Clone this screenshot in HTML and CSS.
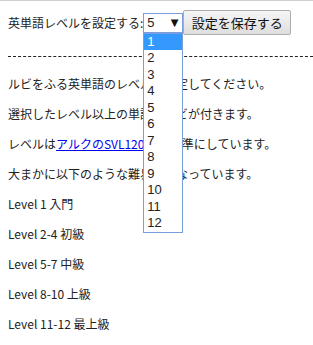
FILE: index.html
```html
<!DOCTYPE html>
<html lang="ja">
<head>
<meta charset="utf-8">
<link rel="stylesheet" href="styles.css">
</head>
<body>
<div class="bar">
  <span class="label">英単語レベルを設定する:</span>
  <div class="select-wrap">
    <div class="select"><span class="val">5</span><span class="arrow">▼</span></div>
    <ul class="list">
      <li class="sel">1</li><li>2</li><li>3</li><li>4</li><li>5</li><li>6</li>
      <li>7</li><li>8</li><li>9</li><li>10</li><li>11</li><li>12</li>
    </ul>
  </div>
  <button class="save">設定を保存する</button>
</div>
<hr class="dash">
<div class="content">
  <p>ルビをふる英単語のレベルを設定してください。</p>
  <p>選択したレベル以上の単語にルビが付きます。</p>
  <p>レベルは<a href="#">アルクのSVL12000</a>を基準にしています。</p>
  <p>大まかに以下のような難易度になっています。</p>
  <p>Level 1 入門</p>
  <p>Level 2-4 初級</p>
  <p>Level 5-7 中級</p>
  <p>Level 8-10 上級</p>
  <p>Level 11-12 最上級</p>
</div>
</body>
</html>
```
FILE: styles.css
```css
html, body { background: #fff; }
body {
  margin: 0;
  border-top: 1px solid #cfcfcf;
  padding: 0 8px;
  font-family: "Noto Sans CJK JP", "Noto Sans", sans-serif;
  font-size: 12px;
  color: #222;
  overflow: hidden;
}
.bar {
  display: flex;
  align-items: center;
  margin-top: 9px;
  height: 25px;
}
.label { line-height: 16px; }
.select-wrap { position: relative; }
.select {
  box-sizing: border-box;
  width: 40px;
  height: 20px;
  border: 1px solid #7a9ddb;
  display: flex;
  align-items: center;
  justify-content: space-between;
  padding: 0 4px 0 3px;
  font-family: "Liberation Sans", Arial, sans-serif;
  font-size: 13px;
  background: #fff;
}
.arrow {
  font-family: "DejaVu Sans", sans-serif;
  font-size: 10px;
  color: #111;
}
.list {
  position: absolute;
  left: 0;
  top: 20px;
  width: 40px;
  box-sizing: border-box;
  margin: 0;
  padding: 0;
  list-style: none;
  border: 1px solid #7a9ddb;
  background: #fff;
  z-index: 5;
  font-family: "Liberation Sans", Arial, sans-serif;
  font-size: 13px;
}
.list li {
  height: 16.5px;
  line-height: 16.5px;
  padding-left: 3px;
}
.list li.sel { background: #3399ff; color: #fff; }
.save {
  box-sizing: border-box;
  height: 25px;
  width: 108px;
  padding: 0;
  font-family: inherit;
  font-size: 13px;
  color: #111;
  border: 1px solid #adadad;
  border-radius: 2px;
  background: linear-gradient(#f6f6f6, #dedede);
}
.dash {
  margin: 21px -8px 0 0;
  border: 0;
  border-top: 1px dashed #222;
  height: 0;
}
.content {
  display: flex;
  flex-direction: column;
  gap: 14px;
  margin-top: 19px;
}
.content p {
  margin: 0;
  line-height: 16px;
  white-space: nowrap;
}
.content a { color: #0000ee; text-decoration: underline; }
```
